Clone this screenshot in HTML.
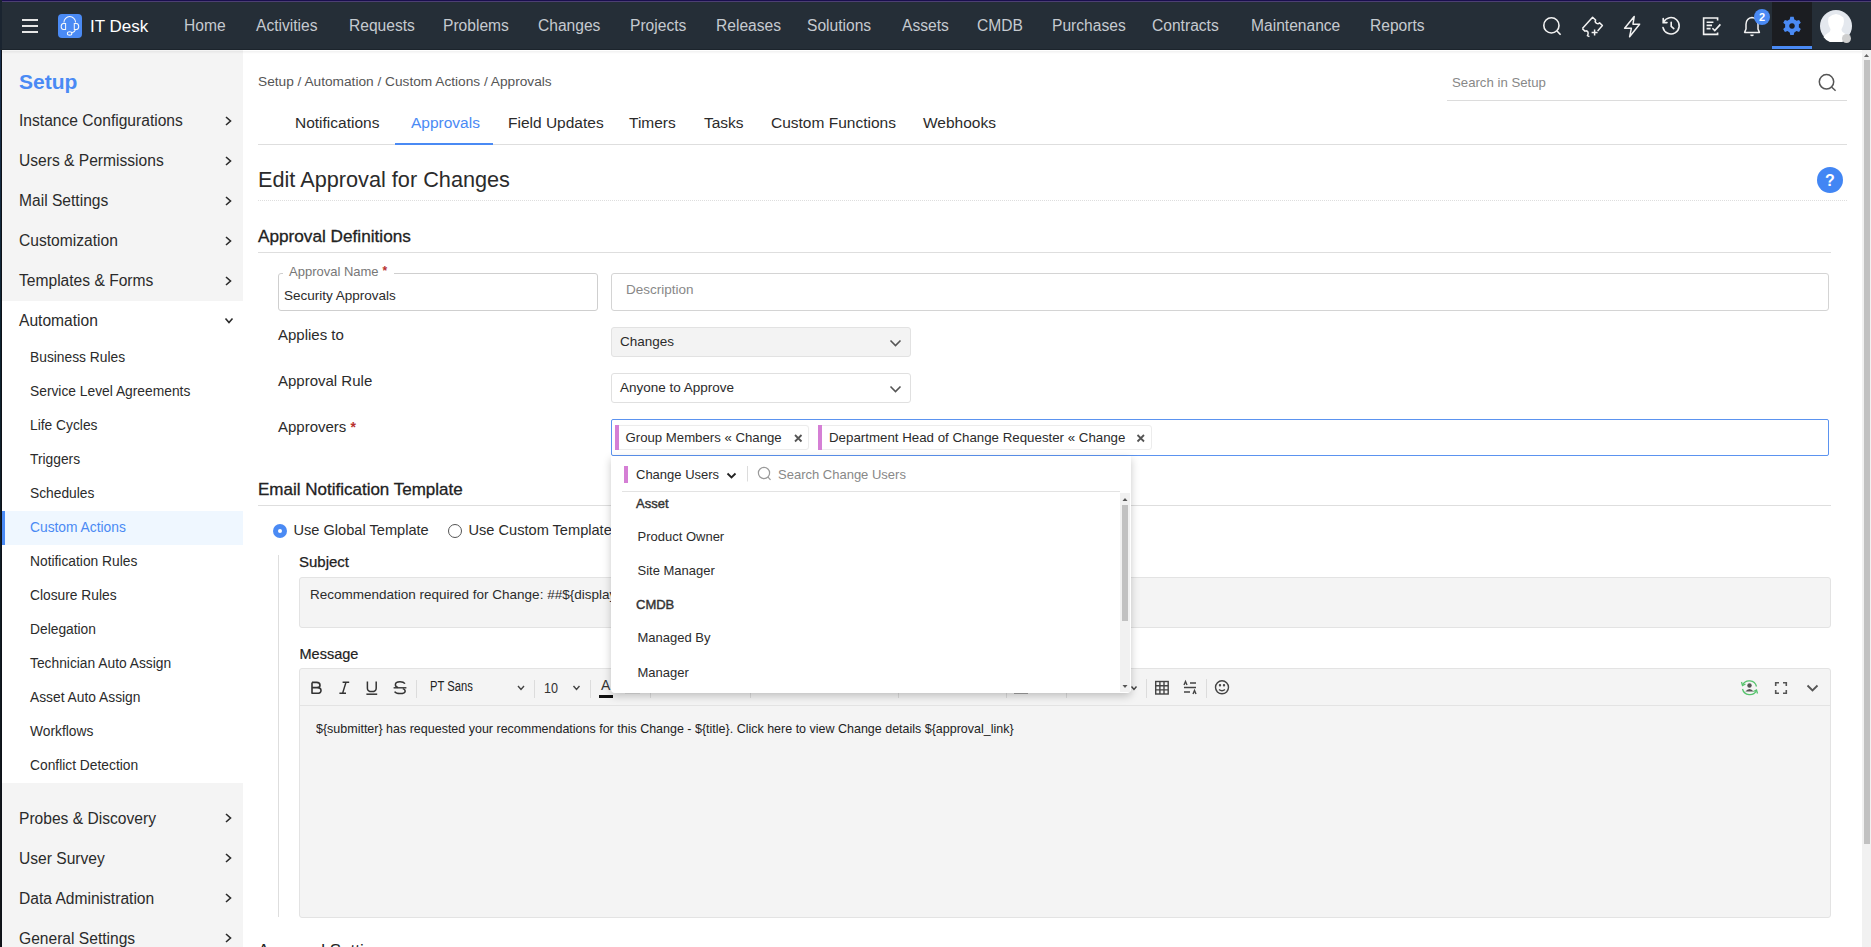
<!DOCTYPE html>
<html><head><meta charset="utf-8">
<style>
*{box-sizing:border-box;margin:0;padding:0}
html,body{width:1871px;height:947px;overflow:hidden;background:#fff;font-family:"Liberation Sans",sans-serif;color:#2b2b2b}
.a{position:absolute;white-space:nowrap;line-height:1}
.b{position:absolute}
#nav{position:absolute;left:0;top:0;width:1871px;height:50px;background:#252e37}
#nav .t{position:absolute;top:18.3px;font-size:15.6px;line-height:1;color:#c5cad0;white-space:nowrap}
#side{position:absolute;left:0;top:50px;width:243px;height:897px;background:#f4f4f4}
.si{position:absolute;left:19px;font-size:15.6px;line-height:1;color:#2b2b2b;white-space:nowrap}
.ss{position:absolute;left:30px;font-size:13.8px;line-height:1;color:#2b2b2b;white-space:nowrap}
.tab{position:absolute;top:115px;font-size:15.5px;line-height:1;color:#2b2b2b;white-space:nowrap}
.lbl{position:absolute;left:278px;font-size:15px;line-height:1;color:#2b2b2b;white-space:nowrap}
.dd{position:absolute;font-size:13px;line-height:1;color:#2b2b2b;white-space:nowrap}
</style></head><body>
<!-- NAVBAR -->
<div id="nav">
  <div class="b" style="left:0;top:0;width:1871px;height:1px;background:#1a0e4e"></div>
  <div class="b" style="left:0;top:1px;width:1871px;height:1px;background:#4c3f72"></div>
  <div class="b" style="left:22px;top:19px;width:16px;height:2px;background:#e6e6e6"></div>
  <div class="b" style="left:22px;top:25px;width:16px;height:2px;background:#e6e6e6"></div>
  <div class="b" style="left:22px;top:31px;width:16px;height:2px;background:#e6e6e6"></div>
  <div class="b" style="left:58px;top:14px;width:24px;height:24px;border-radius:4px;background:#4a8af4"></div>
  <svg class="b" style="left:58px;top:14px" width="24" height="24" viewBox="0 0 24 24" fill="none" stroke="#f4f7fb" stroke-width="1.05">
    <path d="M5.9 8.4 A5.85 5.85 0 0 1 17.6 8.4"/>
    <path d="M7.6 9.4 H5.4 Q3.2 9.6 3.2 12.4 Q3.2 15.3 5.4 15.4 H7.6 Z"/>
    <path d="M16.3 9.4 H18.5 Q20.7 9.6 20.7 12.4 Q20.7 15.3 18.5 15.4 H16.3 Z"/>
    <path d="M17.6 15.4 Q16.8 18.2 13.8 18.9"/>
    <ellipse cx="11.6" cy="19.4" rx="2.2" ry="1.7"/>
  </svg>
  <div class="a" style="left:90px;top:18px;font-size:17px;color:#fff">IT Desk</div>
  <div class="t" style="left:184px">Home</div>
  <div class="t" style="left:256px">Activities</div>
  <div class="t" style="left:349px">Requests</div>
  <div class="t" style="left:443px">Problems</div>
  <div class="t" style="left:538px">Changes</div>
  <div class="t" style="left:630px">Projects</div>
  <div class="t" style="left:716px">Releases</div>
  <div class="t" style="left:807px">Solutions</div>
  <div class="t" style="left:902px">Assets</div>
  <div class="t" style="left:977px">CMDB</div>
  <div class="t" style="left:1052px">Purchases</div>
  <div class="t" style="left:1152px">Contracts</div>
  <div class="t" style="left:1251px">Maintenance</div>
  <div class="t" style="left:1370px">Reports</div>
  <!-- right icons -->
  <svg class="b" style="left:1540px;top:14px" width="24" height="24" viewBox="0 0 24 24" fill="none" stroke="#f2f2f2" stroke-width="1.6">
    <circle cx="11.4" cy="11.4" r="7.6"/><path d="M17 17 L20.6 20.8"/>
  </svg>
  <svg class="b" style="left:1580px;top:14px" width="24" height="24" viewBox="0 0 24 24" fill="none" stroke="#f2f2f2" stroke-width="1.5" stroke-linejoin="round">
    <path d="M2.4 14.6 L12.6 3.2 L15.6 6 Q14.4 8 16.6 9.4 Q18.4 10.2 19.6 8.8 L22.4 11.6 L17.6 17"/>
    <path d="M2.4 14.6 L5 17.2 Q7 16.2 8 18.2 Q8.6 20 7.4 21.6 L9.4 22.6"/>
    <path d="M11.6 18.6 h6 M14.6 15.6 v6"/>
  </svg>
  <svg class="b" style="left:1620px;top:14px" width="24" height="24" viewBox="0 0 24 24" fill="none" stroke="#f2f2f2" stroke-width="1.5" stroke-linejoin="round">
    <path d="M14.2 2.6 L4.6 14.2 H11.4 L9.6 22.8 L19.6 10.2 H13 Z"/>
  </svg>
  <svg class="b" style="left:1659px;top:14px" width="24" height="24" viewBox="0 0 24 24" fill="none" stroke="#f2f2f2" stroke-width="1.6" stroke-linecap="round">
    <path d="M4.6 8.2 A8.2 8.2 0 1 1 4 13.6"/>
    <path d="M4.2 4.6 V8.6 H8"/>
    <path d="M12.2 8.2 V12.4 L14.8 14.6"/>
  </svg>
  <svg class="b" style="left:1700px;top:14px" width="24" height="24" viewBox="0 0 24 24" fill="none" stroke="#f2f2f2" stroke-width="1.6">
    <path d="M17.6 6.6 V4 H3.6 V20.4 H17.6 V18.4"/>
    <path d="M6.6 8.2 H13.4 M6.6 11.4 H12 M6.6 14.6 H10.6"/>
    <path d="M12.4 14.2 L14.8 16.6 L20.4 10.4"/>
  </svg>
  <svg class="b" style="left:1740px;top:14px" width="24" height="24" viewBox="0 0 24 24" fill="none" stroke="#f2f2f2" stroke-width="1.5" stroke-linejoin="round">
    <path d="M12 3.6 Q6.4 4.2 6 10.2 V15 L4.6 18.4 H19.4 L18 15 V10.2 Q17.6 4.2 12 3.6 Z"/>
    <path d="M10.6 20.6 Q12 22.4 13.4 20.6"/>
  </svg>
  <div class="b" style="left:1754px;top:9px;width:16px;height:16px;border-radius:50%;background:#4a8af4;color:#fff;font-size:11px;line-height:16px;text-align:center;font-weight:bold">2</div>
  <div class="b" style="left:1772px;top:2px;width:40px;height:44px;background:#1b1d21"></div>
  <div class="b" style="left:1772px;top:46px;width:40px;height:3px;background:#4a8af4"></div>
  <svg class="b" style="left:1780px;top:14px" width="24" height="24" viewBox="0 0 24 24">
    <path fill="#4a8af4" fill-rule="evenodd" d="M10.3 2.8 h3.4 l0.6 2.6 a7 7 0 0 1 2.2 1.3 l2.6 -0.8 1.7 2.9 -2 1.8 a7 7 0 0 1 0 2.6 l2 1.8 -1.7 2.9 -2.6 -0.8 a7 7 0 0 1 -2.2 1.3 l-0.6 2.6 h-3.4 l-0.6 -2.6 a7 7 0 0 1 -2.2 -1.3 l-2.6 0.8 -1.7 -2.9 2 -1.8 a7 7 0 0 1 0 -2.6 l-2 -1.8 1.7 -2.9 2.6 0.8 a7 7 0 0 1 2.2 -1.3 Z M12 9.2 a2.8 2.8 0 1 0 0.01 0 Z"/>
  </svg>
  <div class="b" style="left:1820px;top:10px;width:32px;height:32px;border-radius:50%;background:#e4e8ee"></div>
  <svg class="b" style="left:1820px;top:10px" width="32" height="32" viewBox="0 0 32 32">
    <path fill="#fff" d="M8.6 7.5 Q16 0.5 23.4 7.5 Q25 14 21.6 19 Q21 21.2 24 23 Q27.5 25 28.6 27 A15.8 15.8 0 0 1 3.4 27 Q4.5 25 8 23 Q11 21.2 10.4 19 Q7 14 8.6 7.5 Z"/>
  </svg>
  <div class="b" style="left:1842px;top:34px;width:9px;height:9px;border-radius:50%;background:#cfcfcf"></div>
</div>

<!-- SIDEBAR -->
<div id="side">
  <div class="b" style="left:0;top:251px;width:243px;height:482px;background:#fff"></div>
  <div class="b" style="left:2px;top:461px;width:241px;height:34px;background:#eff7ff"></div>
  <div class="b" style="left:2px;top:461px;width:3px;height:34px;background:#4a8af4"></div>
  
</div>
<div class="b" style="left:0;top:0;width:1px;height:947px;background:linear-gradient(#1c3456,#0e2331 35%,#121519 90%)"></div>
<div class="b" style="left:1px;top:0;width:1px;height:947px;background:#0d1118"></div>
<div class="b" style="left:0;top:0;width:2px;height:50px;background:#1a2430"></div>

<div class="a" style="left:19px;top:71px;font-size:21px;font-weight:bold;color:#4a8af4">Setup</div>
<div class="si" style="top:112.7px">Instance Configurations</div>
<div class="si" style="top:152.7px">Users &amp; Permissions</div>
<div class="si" style="top:192.7px">Mail Settings</div>
<div class="si" style="top:232.7px">Customization</div>
<div class="si" style="top:272.7px">Templates &amp; Forms</div>
<div class="si" style="top:312.7px">Automation</div>
<div class="ss" style="top:351px">Business Rules</div>
<div class="ss" style="top:385px">Service Level Agreements</div>
<div class="ss" style="top:419px">Life Cycles</div>
<div class="ss" style="top:453px">Triggers</div>
<div class="ss" style="top:487px">Schedules</div>
<div class="ss" style="top:521px;color:#4a8af4">Custom Actions</div>
<div class="ss" style="top:555px">Notification Rules</div>
<div class="ss" style="top:589px">Closure Rules</div>
<div class="ss" style="top:623px">Delegation</div>
<div class="ss" style="top:657px">Technician Auto Assign</div>
<div class="ss" style="top:691px">Asset Auto Assign</div>
<div class="ss" style="top:725px">Workflows</div>
<div class="ss" style="top:759px">Conflict Detection</div>
<div class="si" style="top:810.7px">Probes &amp; Discovery</div>
<div class="si" style="top:850.7px">User Survey</div>
<div class="si" style="top:890.7px">Data Administration</div>
<div class="si" style="top:930.7px">General Settings</div>
<svg class="b" style="left:0;top:0" width="243" height="947" fill="none" stroke="#2b2b2b" stroke-width="1.6">
  <path d="M226 117 L230.5 121 L226 125"/>
  <path d="M226 157 L230.5 161 L226 165"/>
  <path d="M226 197 L230.5 201 L226 205"/>
  <path d="M226 237 L230.5 241 L226 245"/>
  <path d="M226 277 L230.5 281 L226 285"/>
  <path d="M225.5 318.5 L229 322.5 L232.5 318.5"/>
  <path d="M226 814 L230.5 818 L226 822"/>
  <path d="M226 854 L230.5 858 L226 862"/>
  <path d="M226 894 L230.5 898 L226 902"/>
  <path d="M226 934 L230.5 938 L226 942"/>
</svg>

<!-- MAIN -->
<div class="a" style="left:258px;top:75px;font-size:13.7px;color:#555">Setup / Automation / Custom Actions / Approvals</div>
<div class="a" style="left:1452px;top:76px;font-size:13.2px;color:#888">Search in Setup</div>
<div class="b" style="left:1447px;top:100px;width:400px;height:1px;background:#dcdcdc"></div>
<svg class="b" style="left:1816px;top:72px" width="24" height="22" viewBox="0 0 24 22" fill="none" stroke="#555" stroke-width="1.5">
  <circle cx="10.5" cy="9.8" r="7.2"/><path d="M15.8 15.2 L19.6 18.8"/>
</svg>

<div class="tab" style="left:295px">Notifications</div>
<div class="tab" style="left:411px;color:#4a8af4">Approvals</div>
<div class="tab" style="left:508px">Field Updates</div>
<div class="tab" style="left:629px">Timers</div>
<div class="tab" style="left:704px">Tasks</div>
<div class="tab" style="left:771px">Custom Functions</div>
<div class="tab" style="left:923px">Webhooks</div>
<div class="b" style="left:258px;top:144px;width:1589px;height:1px;background:#dedede"></div>
<div class="b" style="left:395px;top:143px;width:98px;height:2px;background:#4a8af4"></div>

<div class="a" style="left:258px;top:169px;font-size:21.7px;color:#2b2b2b">Edit Approval for Changes</div>
<div class="b" style="left:258px;top:200px;width:1589px;height:1px;border-top:1px dotted #dedede"></div>
<div class="b" style="left:1817px;top:167px;width:26px;height:26px;border-radius:50%;background:#4286f4;color:#fff;font-weight:bold;font-size:16px;line-height:28px;text-align:center">?</div>

<div class="a" style="left:258px;top:228px;font-size:17.2px;color:#222;-webkit-text-stroke:0.3px #222">Approval Definitions</div>
<div class="b" style="left:258px;top:252px;width:1573px;height:1px;background:#dedede"></div>

<div class="b" style="left:278px;top:273px;width:320px;height:38px;border:1px solid #cfcfcf;border-radius:3px"></div>
<div class="b" style="left:283px;top:265px;width:111px;height:12px;background:#fff"></div>
<div class="a" style="left:289px;top:265px;font-size:13px;color:#777">Approval Name<span style="color:#b8312f;font-weight:bold;font-size:12px;position:relative;left:4px;top:-1px">*</span></div>
<div class="a" style="left:284px;top:289px;font-size:13.5px;color:#2b2b2b">Security Approvals</div>
<div class="b" style="left:611px;top:273px;width:1218px;height:38px;border:1px solid #d4d4d4;border-radius:3px"></div>
<div class="a" style="left:626px;top:283px;font-size:13.5px;color:#888">Description</div>

<div class="lbl" style="top:327px">Applies to</div>
<div class="b" style="left:611px;top:327px;width:300px;height:30px;background:#f3f3f3;border:1px solid #e2e2e2;border-radius:3px"></div>
<div class="a" style="left:620px;top:335px;font-size:13.5px;color:#2b2b2b">Changes</div>
<div class="lbl" style="top:372.5px">Approval Rule</div>
<div class="b" style="left:611px;top:373px;width:300px;height:30px;background:#fff;border:1px solid #e0e0e0;border-radius:3px"></div>
<div class="a" style="left:620px;top:381px;font-size:13.5px;color:#2b2b2b">Anyone to Approve</div>
<svg class="b" style="left:0;top:0" width="920" height="420" fill="none" stroke="#555" stroke-width="1.6">
  <path d="M890.5 340.5 L895.5 345.5 L900.5 340.5"/>
  <path d="M890.5 386.5 L895.5 391.5 L900.5 386.5"/>
</svg>
<div class="lbl" style="top:419px">Approvers <span style="color:#b8312f;font-weight:bold;font-size:14px">*</span></div>

<div class="b" style="left:611px;top:419px;width:1218px;height:37px;border:1px solid #5b93f0;border-radius:2px"></div>
<div class="b" style="left:615px;top:425px;width:194px;height:25px;border:1px solid #ececec;border-radius:3px;box-shadow:0 0 1px rgba(0,0,0,.05)"></div>
<div class="b" style="left:615px;top:425px;width:4px;height:25px;background:#d57fd5"></div>
<div class="a" style="left:625.5px;top:431px;font-size:13.2px;color:#2b2b2b">Group Members « Change</div>
<div class="b" style="left:818px;top:425px;width:334px;height:25px;border:1px solid #ececec;border-radius:3px"></div>
<div class="b" style="left:818px;top:425px;width:4px;height:25px;background:#d57fd5"></div>
<div class="a" style="left:829px;top:431px;font-size:13.3px;color:#2b2b2b">Department Head of Change Requester « Change</div>
<svg class="b" style="left:0;top:0" width="1160" height="460" fill="none" stroke="#555" stroke-width="1.8">
  <path d="M795 435 L801.5 441.5 M801.5 435 L795 441.5"/>
  <path d="M1137.5 435 L1144 441.5 M1144 435 L1137.5 441.5"/>
</svg>

<div class="a" style="left:258px;top:481px;font-size:17px;color:#222;-webkit-text-stroke:0.3px #222">Email Notification Template</div>
<div class="b" style="left:258px;top:505px;width:1573px;height:1px;background:#dedede"></div>
<div class="b" style="left:273px;top:524px;width:14px;height:14px;border-radius:50%;background:#4a8af4"></div>
<div class="b" style="left:278px;top:529px;width:4px;height:4px;border-radius:50%;background:#fff"></div>
<div class="a" style="left:293.5px;top:522.5px;font-size:14.6px;color:#2b2b2b">Use Global Template</div>
<div class="b" style="left:448px;top:524px;width:14px;height:14px;border-radius:50%;border:1px solid #555"></div>
<div class="a" style="left:468.5px;top:522.5px;font-size:14.6px;color:#2b2b2b">Use Custom Template</div>

<div class="b" style="left:278px;top:555px;width:1px;height:362px;background:#dedede"></div>
<div class="a" style="left:299px;top:554px;font-size:15px;color:#222;-webkit-text-stroke:0.25px #222">Subject</div>
<div class="b" style="left:299px;top:577px;width:1532px;height:51px;background:#f4f4f4;border:1px solid #e3e3e3;border-radius:3px"></div>
<div class="a" style="left:310px;top:587.5px;font-size:13.5px;color:#2b2b2b">Recommendation required for Change: ##${display_id}## ${title}</div>
<div class="a" style="left:299.5px;top:647px;font-size:14.5px;color:#222;-webkit-text-stroke:0.2px #222">Message</div>
<div class="b" style="left:299px;top:668px;width:1532px;height:250px;background:#f4f4f4;border:1px solid #e3e3e3;border-radius:3px"></div>
<div class="b" style="left:300px;top:705px;width:1530px;height:1px;background:#e3e3e3"></div>
<div class="a" style="left:315.5px;top:722px;font-size:13.5px;color:#222;transform:scaleX(0.925);transform-origin:0 0">${submitter} has requested your recommendations for this Change - ${title}. Click here to view Change details ${approval_link}</div>

<!-- toolbar -->
<svg class="b" style="left:300px;top:670px" width="120" height="30" fill="none" stroke="#333" stroke-width="1.6" stroke-linejoin="round">
  <path d="M12 12.4 H16.6 Q20 12.4 20 15.2 Q20 17.6 16.6 17.6 H12 M12 17.6 H17.2 Q21 17.6 21 20.4 Q21 23.3 17.2 23.3 H12 Z M12 12.4 V23.3"/>
  <path d="M42.6 12.2 H49.2 M39.4 23.3 H46 M46 12.2 L42.6 23.3" stroke-width="1.4"/>
  <path d="M67.4 11.6 V18.2 Q67.4 21.6 71.8 21.6 Q76.2 21.6 76.2 18.2 V11.6" stroke-width="1.5"/>
  <path d="M66.4 24.2 H77.2" stroke-width="1.5"/>
  <path d="M105 13.6 Q103.6 11.8 100 11.8 Q95.4 11.8 95.4 14.8 Q95.4 16.8 98 17.4 M102.8 18.6 Q105.2 19.4 105.2 21 Q105.2 23.6 100 23.6 Q96 23.6 94.6 21.6" stroke-width="1.5"/>
  <path d="M93.6 17.8 H106.4" stroke-width="1.4"/>
</svg>
<div class="a" style="left:430px;top:679px;font-size:14px;color:#222;transform:scaleX(0.8);transform-origin:0 0">PT Sans</div>
<div class="a" style="left:544px;top:681px;font-size:14px;color:#333;transform:scaleX(0.9);transform-origin:0 0">10</div>
<div class="a" style="left:601px;top:678px;font-size:14px;color:#333">A</div>
<div class="b" style="left:599px;top:695px;width:14px;height:3px;background:#111"></div>
<svg class="b" style="left:0;top:650px" width="1871" height="60" fill="none" stroke="#444" stroke-width="1.4">
  <path d="M416.5 30 V48 M534.5 30 V48 M590.5 30 V48 M650.5 30 V48 M750.5 30 V48 M898.5 30 V48 M1006.5 30 V48 M1066.5 30 V48 M1146.5 29 V48 M1206.5 29 V48" stroke="#dcdcdc" stroke-width="1"/>
  <path d="M660 42.5 H670 M757 42.5 H771 M1014 43 H1028 M1045 42.5 H1050 M1108 42.5 H1113" stroke="#555" stroke-width="1.2"/>
  <rect x="625" y="41" width="15" height="3" fill="#e0e0e0" stroke="none"/>
  <path d="M518 36 L521 39.5 L524 36 M573.5 36 L576.5 39.5 L579.5 36 M1131.5 36.5 L1134 39.5 L1136.5 36.5"/>
  <rect x="1155.7" y="31.5" width="12.5" height="12.5"/>
  <path d="M1159.9 31.5 V44 M1164 31.5 V44 M1155.7 35.7 H1168.2 M1155.7 39.9 H1168.2"/>
  <path d="M1190 33 H1196 M1184 37.5 H1196 M1184 42 H1190 M1184 35 L1185.5 31.5 L1187 35 M1193 44 L1194.5 40.5 L1196 44"/>
  <circle cx="1222" cy="37.3" r="6.5"/>
  <path d="M1219 39.5 Q1222 42 1225 39.5"/>
  <circle cx="1220" cy="35.3" r="0.5" fill="#444"/><circle cx="1224" cy="35.3" r="0.5" fill="#444"/>
  <path d="M1742.5 35 A7.5 7.5 0 0 1 1756.5 36.5 M1756.5 40.5 A7.5 7.5 0 0 1 1742.5 39" stroke="#55c36c" stroke-width="1.3"/>
  <path d="M1741.5 32 L1742.5 35.5 L1745.5 34 M1757.5 43.5 L1756.5 40 L1753.5 41.5" stroke="#55c36c" stroke-width="1.3"/>
  <circle cx="1749.5" cy="35.5" r="2.2" fill="#555" stroke="none"/>
  <path d="M1745.3 41.6 Q1749.5 36.5 1753.7 41.6 Z" fill="#555" stroke="none"/>
  <path d="M1775.7 36 V32.7 H1779 M1783 32.7 H1786.3 V36 M1786.3 40 V43.3 H1783 M1779 43.3 H1775.7 V40" stroke="#555" stroke-width="1.6"/>
  <path d="M1807.5 35.5 L1812.5 40.5 L1817.5 35.5" stroke="#555" stroke-width="1.8"/>
</svg>

<div class="a" style="left:258px;top:942px;font-size:17px;color:#222">Approval Settings</div>

<!-- DROPDOWN -->
<div class="b" style="left:611px;top:456px;width:520px;height:237px;background:#fff;border-radius:0 0 4px 4px;box-shadow:0 3px 8px rgba(0,0,0,.22)"></div>
<div class="b" style="left:624px;top:466px;width:4px;height:17px;background:#d57fd5"></div>
<div class="dd" style="left:636px;top:468px">Change Users</div>
<svg class="b" style="left:600px;top:450px" width="540" height="250" fill="none" stroke="#222" stroke-width="1.8">
  <path d="M127.5 23.5 L131.5 27.5 L135.5 23.5"/>
  <path d="M147.5 16 V31.5" stroke="#dcdcdc" stroke-width="1"/>
  <circle cx="164" cy="23" r="5.6" stroke="#999" stroke-width="1.2"/>
  <path d="M168 27.2 L170.5 29.8" stroke="#999" stroke-width="1.2"/>
</svg>
<div class="dd" style="left:778px;top:468px;color:#888">Search Change Users</div>
<div class="b" style="left:622px;top:491px;width:498px;height:1px;background:#e3e3e3"></div>
<div class="b" style="left:1120px;top:493px;width:10px;height:199px;background:#f1f1f1"></div>
<div class="b" style="left:1122px;top:505px;width:6px;height:116px;background:#c1c1c1"></div>
<svg class="b" style="left:1120px;top:493px" width="10" height="200" fill="#555">
  <path d="M2.5 8 L5 5 L7.5 8 Z"/><path d="M2.5 192 L5 195 L7.5 192 Z"/>
</svg>
<div class="dd" style="left:636px;top:497px;color:#333;-webkit-text-stroke:0.4px #333">Asset</div>
<div class="dd" style="left:637.5px;top:530px">Product Owner</div>
<div class="dd" style="left:637.5px;top:564px">Site Manager</div>
<div class="dd" style="left:636px;top:598px;color:#333;-webkit-text-stroke:0.4px #333">CMDB</div>
<div class="dd" style="left:637.5px;top:631px">Managed By</div>
<div class="dd" style="left:637.5px;top:666px">Manager</div>

<div class="b" style="left:0;top:49px;width:1871px;height:1px;background:#1c242c"></div>
<div class="b" style="left:2px;top:51px;width:1869px;height:3px;background:linear-gradient(rgba(0,0,0,.06),rgba(0,0,0,0))"></div>
<!-- page scrollbar -->
<div class="b" style="left:1862px;top:50px;width:9px;height:897px;background:#f1f1f1"></div>
<div class="b" style="left:1864px;top:60px;width:6px;height:784px;background:#c1c1c1"></div>
<svg class="b" style="left:1862px;top:50px" width="9" height="10" fill="#666"><path d="M2 7 L4.5 4 L7 7 Z"/></svg>
</body></html>
